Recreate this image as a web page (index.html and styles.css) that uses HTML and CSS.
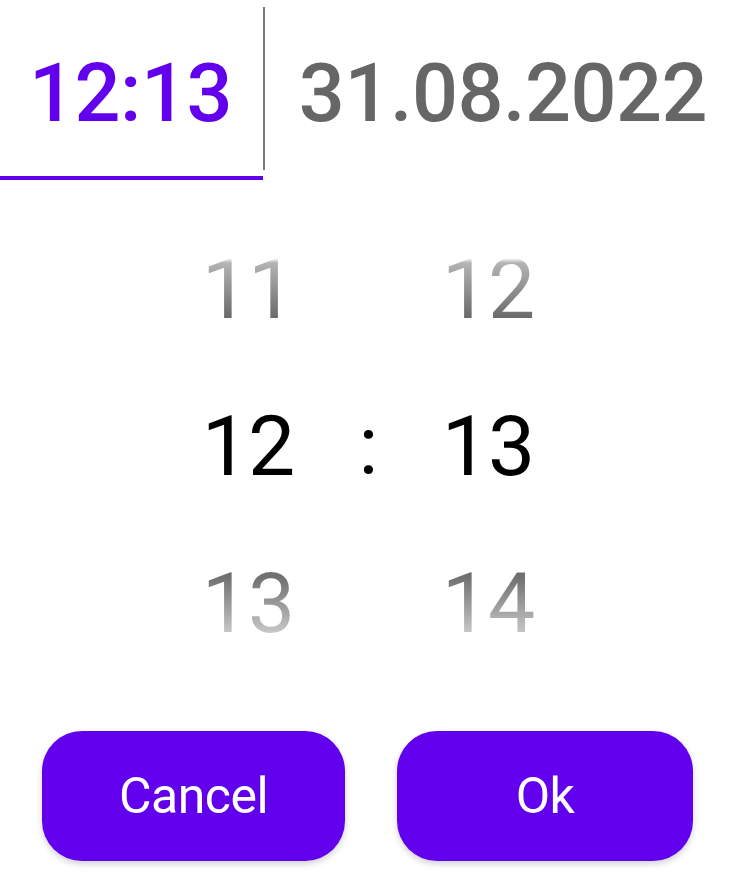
FILE: index.html
```html
<!DOCTYPE html>
<html>
<head>
<meta charset="utf-8">
<link rel="stylesheet" href="styles.css">
</head>
<body>
<div class="picker">
  <div class="tabs">
    <div class="tab tab-active">12:13</div>
    <div class="divider"></div>
    <div class="tab tab-date">31.08.2022</div>
  </div>
  <div class="wheel">
    <div class="cell fade-top">11</div>
    <div class="cell"></div>
    <div class="cell fade-top">12</div>
    <div class="cell selected">12</div>
    <div class="cell selected colon">:</div>
    <div class="cell selected">13</div>
    <div class="cell fade-bottom">13</div>
    <div class="cell"></div>
    <div class="cell fade-bottom">14</div>
  </div>
  <div class="actions">
    <button class="btn btn-cancel">Cancel</button>
    <button class="btn btn-ok">Ok</button>
  </div>
</div>
</body>
</html>
```
FILE: styles.css
```css
html, body {
  margin: 0;
  padding: 0;
  background: #ffffff;
}
body {
  font-family: Roboto, "Liberation Sans", sans-serif;
  width: 733px;
  height: 888px;
  overflow: hidden;
}
.picker {
  display: flex;
  flex-direction: column;
}
.tabs {
  display: flex;
  align-items: flex-start;
  height: 180px;
}
.tab {
  font-size: 81px;
  font-weight: 500;
  line-height: 164px;
  padding-top: 12px;
  text-align: center;
  letter-spacing: -0.5px;
}
.tab-active {
  width: 261px;
  color: #6200ee;
  border-bottom: 4px solid #6200ee;
  padding-right: 2px;
}
.divider {
  width: 2px;
  height: 163px;
  margin-top: 7px;
  background: #7a7a7a;
}
.tab-date {
  flex: 1;
  color: #666666;
  padding-left: 8px;
}
.wheel {
  display: grid;
  grid-template-columns: 120px 120px 120px;
  grid-auto-rows: 157px;
  justify-content: center;
  margin-top: 31px;
  margin-left: 3px;
}
.cell {
  font-size: 84px;
  font-weight: 400;
  line-height: 157px;
  text-align: center;
  letter-spacing: -1px;
}
.selected {
  color: #000000;
}
.colon {
  font-size: 82px;
}
.fade-top {
  background: linear-gradient(to bottom, #ffffff 0%, #ffffff 30%, #b4b4b4 33%, #666666 70%, #666666 100%);
  -webkit-background-clip: text;
  background-clip: text;
  color: transparent;
}
.fade-bottom {
  background: linear-gradient(to bottom, #707070 0%, #707070 33%, #777777 36%, #cfcfcf 72%, #ffffff 100%);
  -webkit-background-clip: text;
  background-clip: text;
  color: transparent;
}
.actions {
  display: flex;
  margin-top: 49px;
  padding-left: 42px;
}
.btn {
  height: 130px;
  border: none;
  border-radius: 40px;
  background: #6200ee;
  color: #ffffff;
  font-family: Roboto, "Liberation Sans", sans-serif;
  font-size: 50px;
  font-weight: 400;
  letter-spacing: -0.5px;
  box-shadow: 0 3px 6px rgba(0, 0, 0, 0.18);
  padding: 0;
}
.btn-cancel {
  width: 303px;
}
.btn-ok {
  width: 296px;
  margin-left: 52px;
}
```
